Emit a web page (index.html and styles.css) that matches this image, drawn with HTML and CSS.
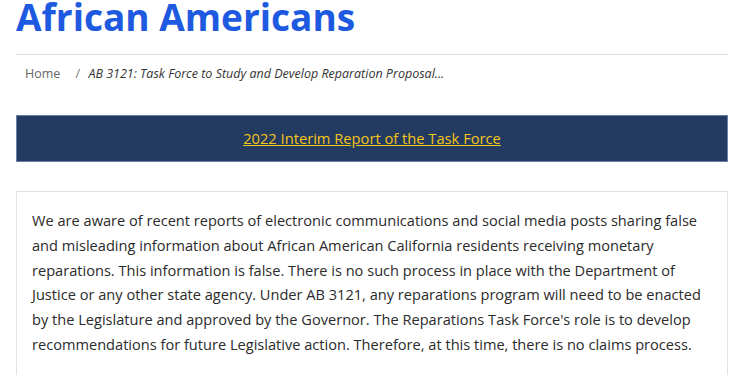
FILE: index.html
```html
<!DOCTYPE html>
<html lang="en">
<head>
    <meta charset="UTF-8">
    <meta name="viewport" content="width=device-width, initial-scale=1.0">
    <title>African Americans</title>
    <link rel="stylesheet" href="styles.css">
</head>
<body>
    <div class="container">
        <h1 class="page-title">African Americans</h1>

        <nav class="breadcrumb">
            <a href="#" class="crumb-home">Home</a>
            <span class="crumb-sep">/</span>
            <span class="crumb-current">AB 3121: Task Force to Study and Develop Reparation Proposal...</span>
        </nav>

        <div class="report-banner">
            <a href="#">2022 Interim Report of the Task Force</a>
        </div>

        <div class="notice">
            <p>We are aware of recent reports of electronic communications and social media posts sharing false and misleading information about African American California residents receiving monetary reparations. This information is false. There is no such process in place with the Department of Justice or any other state agency. Under AB 3121, any reparations program will need to be enacted by the Legislature and approved by the Governor. The Reparations Task Force's role is to develop recommendations for future Legislative action. Therefore, at this time, there is no claims process.</p>
        </div>
    </div>
</body>
</html>
```

FILE: styles.css
```css
/* General Styles */
body {
    font-family: "Open Sans", "Noto Sans", sans-serif;
    margin: 0;
    padding: 0;
    background: #fff;
    color: #333;
}

.container {
    padding: 0 22px 0 16px;
}

.page-title {
    margin: 0;
    padding-bottom: 20px;
    font-size: 37px;
    line-height: 34px;
    font-weight: 700;
    color: #1e5ae0;
    border-bottom: 1px solid #ddd;
}

/* Breadcrumb */
.breadcrumb {
    padding: 10px 9px 0;
    height: 50px;
    font-size: 12.5px;
    line-height: 18px;
    color: #666;
}

.crumb-home {
    color: #666;
    text-decoration: none;
}

.crumb-sep {
    margin: 0 5px 0 12px;
    color: #777;
}

.crumb-current {
    font-style: italic;
    color: #333;
}

/* Report banner */
.report-banner {
    background: #233a61;
    border: 1px solid #6a7fa3;
    padding: 13px 0 14px;
    text-align: center;
    font-size: 14.7px;
    line-height: 18px;
}

.report-banner a {
    color: #f5c518;
    text-decoration: underline;
}

/* Notice */
.notice {
    margin-top: 29px;
    border: 1px solid #e2e2e2;
    padding: 16px 15px 30px;
}

.notice p {
    margin: 0;
    font-size: 14.6px;
    line-height: 24.75px;
    color: #2b2b2b;
}
```
